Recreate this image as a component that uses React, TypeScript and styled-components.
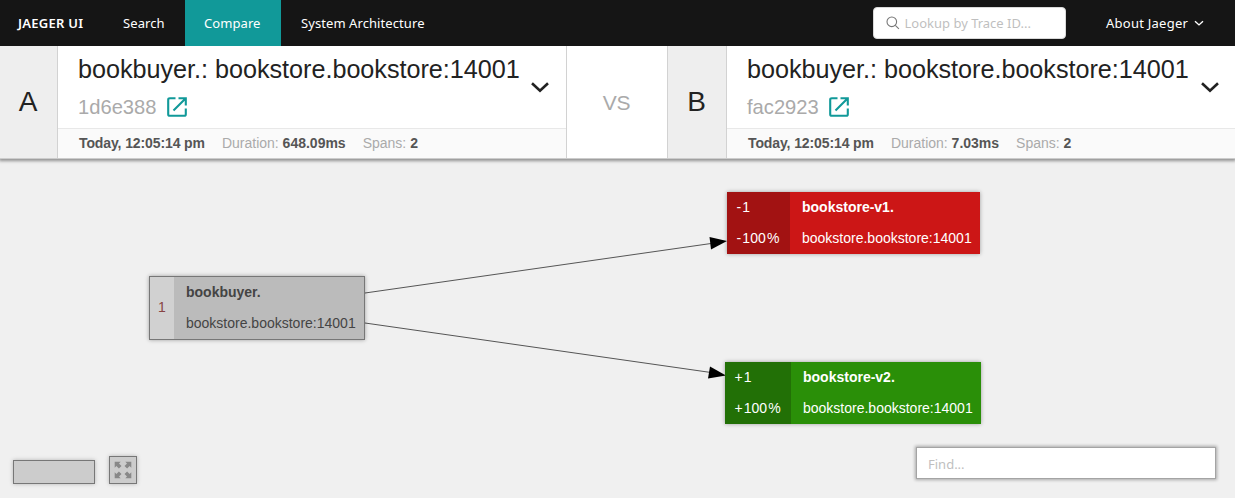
import React from 'react';
import styled, { createGlobalStyle } from 'styled-components';

const Global = createGlobalStyle`
  * { box-sizing: border-box; }
  body { margin: 0; background: #f0f0f0; overflow: hidden; }
  input { font: inherit; }
`;

const Page = styled.div`
  height: 498px;
  display: flex;
  flex-direction: column;
  background: #f0f0f0;
  color: #222;
  font: 14px/21px "Liberation Sans", Arial, sans-serif;
`;

const Nav = styled.nav`
  position: relative;
  z-index: 1;
  display: flex;
  flex: 0 0 46px;
  background: #151515;
  color: #fff;
  font: 13px/46px "Noto Sans", sans-serif;
`;

const NavItem = styled.a<{ $width: number; $pad: number; $active?: boolean; $bold?: boolean }>`
  width: ${p => p.$width}px;
  padding-left: ${p => p.$pad}px;
  white-space: nowrap;
  background: ${p => (p.$active ? '#119999' : 'transparent')};
  font-weight: ${p => (p.$bold ? 600 : 400)};
  letter-spacing: ${p => (p.$bold ? 0.25 : 0.08)}px;
`;

const Lookup = styled.label`
  display: flex;
  align-items: center;
  width: 193px;
  height: 32px;
  margin: 7px 40px 0 auto;
  padding-left: 12px;
  gap: 4.5px;
  background: #fff;
  border: 1px solid #d9d9d9;
  border-radius: 4px;
`;

const Field = styled.input`
  flex: 1;
  min-width: 0;
  padding: 0;
  border: 0;
  outline: 0;
  background: transparent;
  &::placeholder { color: #bfbfbf; opacity: 1; }
`;

const About = styled.div`
  display: flex;
  align-items: center;
  gap: 6px;
  width: 129px;
  letter-spacing: 0.25px;
`;

const Header = styled.header`
  position: relative;
  display: flex;
  flex: 0 0 113px;
  background: #fff;
  border-bottom: 1px solid #ccc;
  box-shadow: 0 1px 3px 1px rgba(0, 0, 0, 0.4);
`;

const Letter = styled.div<{ $width: number }>`
  flex: 0 0 ${p => p.$width}px;
  display: flex;
  align-items: center;
  justify-content: center;
  padding: 0 1px 1px 0;
  background: #eee;
  border-right: 1px solid #d2d2d2;
  font-size: 28px;
`;

const Versus = styled.div`
  flex: 0 0 102px;
  display: flex;
  align-items: center;
  justify-content: center;
  padding-right: 1px;
  border: solid #d2d2d2;
  border-width: 0 1px;
  color: #aaa;
  font-size: 21px;
  letter-spacing: -0.3px;
`;

const Trace = styled.section`
  flex: 1;
  min-width: 0;
  display: flex;
  flex-direction: column;
`;

const TraceTop = styled.div<{ $right: number }>`
  display: flex;
  align-items: center;
  justify-content: space-between;
  height: 82px;
  padding: 0 ${p => p.$right}px 0 20px;
`;

const Title = styled.h1`
  margin: 0;
  padding-top: 2px;
  font-size: 25.2px;
  font-weight: 400;
  line-height: 38px;
  letter-spacing: -0.02px;
  white-space: nowrap;
`;

const TraceId = styled.div`
  display: flex;
  align-items: center;
  gap: 8.5px;
  height: 38px;
  color: #aaa;
  font-size: 20.16px;
`;

const Facts = styled.div`
  display: flex;
  gap: 17px;
  height: 30px;
  padding-left: 21px;
  line-height: 29px;
  background: #fafafa;
  border-top: 1px solid #e8e8e8;
  color: #aaa;
  b { color: #555; }
  > b { letter-spacing: -0.11px; }
`;

const Graph = styled.main`
  position: relative;
  flex: 1;
`;

const Edges = styled.svg`
  position: absolute;
  inset: 0;
`;

type Tone = 'same' | 'removed' | 'added';
const tones = {
  same: { side: '#d1d1d1', body: '#bbb', text: '#444', count: '#844' },
  removed: { side: '#a21212', body: '#cc1616', text: '#fff', count: '#fff' },
  added: { side: '#227006', body: '#2a8f08', text: '#fff', count: '#fff' },
};

const Node = styled.div<{ $tone: Tone; $x: number; $y: number; $width: number }>`
  position: absolute;
  left: ${p => p.$x}px;
  top: ${p => p.$y}px;
  width: ${p => p.$width}px;
  display: flex;
  line-height: 31px;
  white-space: nowrap;
  color: ${p => tones[p.$tone].text};
  background: ${p => tones[p.$tone].body};
  border: ${p => (p.$tone === 'same' ? '1px solid #777' : '0')};
  box-shadow: 0 0 4px rgba(0, 0, 0, 0.35);
`;

const Counts = styled.div<{ $tone: Tone; $width: number; $pad: number }>`
  width: ${p => p.$width}px;
  height: 62px;
  padding-left: ${p => p.$pad}px;
  padding-bottom: ${p => (p.$tone === 'same' ? 1 : 0)}px;
  display: flex;
  flex-direction: column;
  justify-content: center;
  color: ${p => tones[p.$tone].count};
  background: ${p => tones[p.$tone].side};
`;

const Signed = styled.div`
  display: flex;
  gap: 1.2px;
`;

const Names = styled.div`
  padding-left: 12px;
`;

const MiniMap = styled.div`
  position: absolute;
  left: 13px;
  bottom: 14px;
  display: flex;
  align-items: flex-end;
  gap: 14px;
`;

const MapTile = styled.div<{ $width: number; $height: number }>`
  width: ${p => p.$width}px;
  height: ${p => p.$height}px;
  display: flex;
  align-items: center;
  justify-content: center;
  background: #ccc;
  border: 1px solid #777;
  box-shadow: 0 0 4px rgba(0, 0, 0, 0.25);
`;

const Find = styled.label`
  position: absolute;
  left: 916px;
  bottom: 19px;
  width: 300px;
  height: 32px;
  display: flex;
  padding: 1px 11px 0;
  background: #fff;
  border: 1px solid #a4a4a4;
  box-shadow: 0 0 3px 1px rgba(0, 0, 0, 0.3);
  font: 13px "Noto Sans", sans-serif;
`;

const OpenIcon = () => (
  <svg width="24" height="24" viewBox="0 0 24 24" fill="none" stroke="#119999" strokeWidth="2.1">
    <path d="M10.5 3.2H4.8Q3.2 3.2 3.2 4.8V19.2Q3.2 20.8 4.8 20.8H19.2Q20.8 20.8 20.8 19.2V13.5M13.5 3.2H20.8V10.5M20.5 3.5L8.5 15.5" />
  </svg>
);

const Chevron = ({ size, weight, color }: { size: number; weight: number; color: string }) => (
  <svg width={size} height={size} viewBox="0 0 20 20" fill="none" stroke={color} strokeWidth={weight}>
    <path d="M2 6.3L10 13.8L18 6.3" />
  </svg>
);

const SearchIcon = () => (
  <svg width="14" height="14" viewBox="0 0 14 14" fill="none" stroke="#777" strokeWidth="1.1">
    <circle cx="5.8" cy="5.8" r="4.8" />
    <path d="M9.3 9.3L12.9 12.9" />
  </svg>
);

const ExpandIcon = () => (
  <svg width="18" height="18" viewBox="0 0 18 18" fill="#888">
    {[0, 90, 180, 270].map(a => (
      <path key={a} transform={`rotate(${a} 9 9)`} d="M.7.7H6.7L5 2.4L7.5 4.9L4.9 7.5L2.4 5L.7 6.7Z" />
    ))}
  </svg>
);

const TracePanel = ({ id, duration, right }: { id: string; duration: string; right: number }) => (
  <Trace>
    <TraceTop $right={right}>
      <div>
        <Title>bookbuyer.: bookstore.bookstore:14001</Title>
        <TraceId>{id}<OpenIcon /></TraceId>
      </div>
      <Chevron size={20} weight={2.6} color="#222" />
    </TraceTop>
    <Facts>
      <b>Today, 12:05:14 pm</b>
      <span>Duration: <b>{duration}</b></span>
      <span>Spans: <b>2</b></span>
    </Facts>
  </Trace>
);

type NodeProps = { tone: Tone; x: number; y: number; width: number; side: number; pad: number; sign?: string; service: string };

const GraphNode = ({ tone, x, y, width, side, pad, sign, service }: NodeProps) => (
  <Node $tone={tone} $x={x} $y={y} $width={width}>
    <Counts $tone={tone} $width={side} $pad={pad}>
      <Signed>{sign && <span>{sign}</span>}<span>1</span></Signed>
      {sign && <Signed><span>{sign}</span><span>100</span><span>%</span></Signed>}
    </Counts>
    <Names>
      <div><b>{service}</b></div>
      <div>bookstore.bookstore:14001</div>
    </Names>
  </Node>
);

export default function App() {
  return (
    <Page>
      <Global />
      <Nav>
        <NavItem $width={104} $pad={18} $bold>JAEGER UI</NavItem>
        <NavItem $width={81} $pad={19}>Search</NavItem>
        <NavItem $width={96} $pad={19} $active>Compare</NavItem>
        <NavItem $width={170} $pad={20}>System Architecture</NavItem>
        <Lookup><SearchIcon /><Field placeholder="Lookup by Trace ID..." /></Lookup>
        <About>About Jaeger <Chevron size={10} weight={2.8} color="#fff" /></About>
      </Nav>
      <Header>
        <Letter $width={58}>A</Letter>
        <TracePanel id="1d6e388" duration="648.09ms" right={16} />
        <Versus>VS</Versus>
        <Letter $width={59}>B</Letter>
        <TracePanel id="fac2923" duration="7.03ms" right={15} />
      </Header>
      <Graph>
        <Edges width="1235" height="339">
          <g stroke="#555" fill="none">
            <path d="M365 134L711 84.5" />
            <path d="M365 164L711 213.5" />
          </g>
          <path d="M709.5 78L727 82L711 90.5Z" />
          <path d="M710 207.5L726 216.5L708 219.5Z" />
        </Edges>
        <GraphNode tone="same" x={149} y={117} width={216} side={24} pad={8} service="bookbuyer." />
        <GraphNode tone="removed" x={727} y={33} width={253} side={63} pad={9.5} sign="-" service="bookstore-v1." />
        <GraphNode tone="added" x={725} y={203} width={256} side={66} pad={9.4} sign="+" service="bookstore-v2." />
        <MiniMap>
          <MapTile $width={82} $height={24} />
          <MapTile $width={28} $height={28}><ExpandIcon /></MapTile>
        </MiniMap>
        <Find><Field placeholder="Find..." /></Find>
      </Graph>
    </Page>
  );
}
